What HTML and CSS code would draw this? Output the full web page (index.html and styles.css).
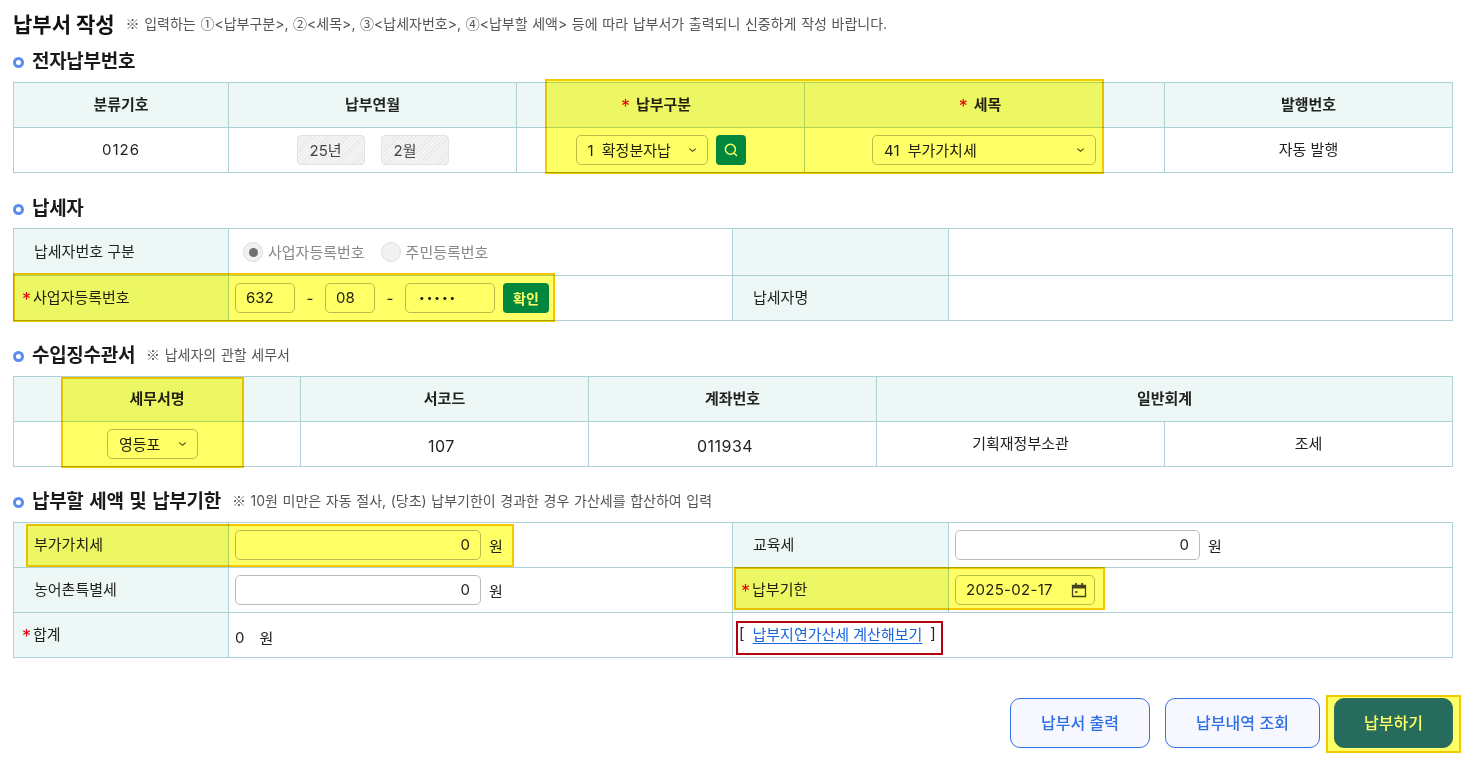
FILE: index.html
```html
<!DOCTYPE html>
<html lang="ko">
<head>
<meta charset="utf-8">
<title>납부서 작성</title>
<link rel="stylesheet" href="styles.css">
</head>
<body>
<main class="page">
  <header class="title-row">
    <h1>납부서 작성</h1>
    <p class="note"><span class="sym">※</span> 입력하는 <span class="sym">①</span>&lt;납부구분&gt;, <span class="sym">②</span>&lt;세목&gt;, <span class="sym">③</span>&lt;납세자번호&gt;, <span class="sym">④</span>&lt;납부할 세액&gt; 등에 따라 납부서가 출력되니 신중하게 작성 바랍니다.</p>
  </header>

  <section class="section s1">
    <div class="sec-head"><h2>전자납부번호</h2></div>
    <table class="grid">
      <colgroup><col class="w15a"><col class="w20"><col class="w20"><col class="w25"><col class="w20"></colgroup>
      <tr>
        <th>분류기호</th><th>납부연월</th><th class="rq"><span class="req gap">*</span>납부구분</th><th class="rq"><span class="req gap">*</span>세목</th><th>발행번호</th>
      </tr>
      <tr>
        <td class="c txt code">0126</td>
        <td class="c"><div class="ctrls center g16"><span class="ro">25년</span><span class="ro">2월</span></div></td>
        <td class="c"><div class="ctrls center g8">
          <div class="select w132"><span>1 확정분자납</span><svg class="chev" viewBox="0 0 10 6"><path d="M1.5 1.5 5 4.500l3.500-3"/></svg></div>
          <button class="square" aria-label="검색"><svg viewBox="0 0 16 16" class="mag"><circle cx="7.4" cy="7.2" r="5"/><path d="m11 11 3 3"/></svg></button>
        </div></td>
        <td><div class="ctrls end"><div class="select w224"><span>41 부가가치세</span><svg class="chev" viewBox="0 0 10 6"><path d="M1.5 1.5 5 4.500l3.500-3"/></svg></div></div></td>
        <td class="c txt">자동 발행</td>
      </tr>
    </table>
  </section>

  <section class="section s2">
    <div class="sec-head"><h2>납세자</h2></div>
    <table class="grid">
      <colgroup><col class="w15a"><col class="w35"><col class="w15"><col class="w35"></colgroup>
      <tr class="tall">
        <th class="lab">납세자번호 구분</th>
        <td class="pad"><div class="ctrls radios">
          <span class="radio on"></span><span class="rl">사업자등록번호</span>
          <span class="radio"></span><span class="rl">주민등록번호</span>
        </div></td>
        <th class="plain"></th><td></td>
      </tr>
      <tr>
        <th class="lab star"><span class="req">*</span>사업자등록번호</th>
        <td class="pad"><div class="ctrls biz">
          <input class="field w60" value="632"><span class="dash">-</span>
          <input class="field w50" value="08"><span class="dash">-</span>
          <input class="field w90 pw" type="password" value="12345">
          <button class="ok">확인</button>
        </div></td>
        <th class="lab">납세자명</th><td></td>
      </tr>
    </table>
  </section>

  <section class="section s3">
    <div class="sec-head"><h2>수입징수관서</h2><p class="note"><span class="sym">※</span> 납세자의 관할 세무서</p></div>
    <table class="grid">
      <colgroup><col class="w20a"><col class="w20"><col class="w20"><col class="w20"><col class="w20"></colgroup>
      <tr><th>세무서명</th><th>서코드</th><th>계좌번호</th><th colspan="2">일반회계</th></tr>
      <tr>
        <td><div class="ctrls sel-office"><div class="select w91"><span>영등포</span><svg class="chev" viewBox="0 0 10 6"><path d="M1.5 1.5 5 4.500l3.500-3"/></svg></div></div></td>
        <td class="c low l1">107</td><td class="c low l2">011934</td><td class="c txt">기획재정부소관</td><td class="c txt">조세</td>
      </tr>
    </table>
  </section>

  <section class="section s4">
    <div class="sec-head"><h2>납부할 세액 및 납부기한</h2><p class="note"><span class="sym">※</span> 10원 미만은 자동 절사, (당초) 납부기한이 경과한 경우 가산세를 합산하여 입력</p></div>
    <table class="grid">
      <colgroup><col class="w15a"><col class="w35"><col class="w15"><col class="w35"></colgroup>
      <tr>
        <th class="lab">부가가치세</th>
        <td class="pad"><div class="ctrls amount"><input class="field num w246" value="0"><span class="won">원</span></div></td>
        <th class="lab">교육세</th>
        <td class="pad"><div class="ctrls amount"><input class="field num w245" value="0"><span class="won">원</span></div></td>
      </tr>
      <tr>
        <th class="lab">농어촌특별세</th>
        <td class="pad"><div class="ctrls amount"><input class="field num w246" value="0"><span class="won">원</span></div></td>
        <th class="lab star"><span class="req">*</span>납부기한</th>
        <td class="pad"><div class="ctrls"><div class="field date"><span>2025-02-17</span>
          <svg class="cal" viewBox="0 0 16 16"><path class="calbody" d="M1.500 3.500h13v11h-13z"/><path class="calfill" d="M1.500 3h13v3.500h-13zM4 1h1.800v3H4zM10.200 1H12v3h-1.800z"/><rect x="4.300" y="9" width="2" height="2" class="calfill"/></svg>
        </div></div></td>
      </tr>
      <tr>
        <th class="lab star"><span class="req">*</span>합계</th>
        <td class="pad"><div class="ctrls total"><span>0</span><span>원</span></div></td>
        <td colspan="2" class="link-cell"><div class="ctrls linkrow"><span>[</span><a href="#">납부지연가산세 계산해보기</a><span>]</span></div></td>
      </tr>
    </table>
  </section>

  <footer class="actions">
    <button class="btn w140">납부서 출력</button>
    <button class="btn w155">납부내역 조회</button>
    <button class="btn primary">납부하기</button>
  </footer>

  <div class="hl a1"></div>
  <div class="hl a2"></div>
  <div class="hl a3"></div>
  <div class="hl a4"></div>
  <div class="hl a5"></div>
  <div class="hl a6"></div>
  <div class="redbox"></div>
</main>
</body>
</html>
```
FILE: styles.css
```css
* { box-sizing: border-box; }
html, body { margin: 0; padding: 0; background: #fff; }
body { font-family: Inter, "Noto Sans CJK KR", "Noto Sans", sans-serif; color: #222; font-size: 15px; overflow: hidden; }
.page { position: relative; width: 1466px; height: 761px; padding: 0 13px; }

h1, h2, p { margin: 0; }
.title-row { display: flex; align-items: center; height: 45px; padding-top: 5px; gap: 11px; }
h1 { font-size: 21px; font-weight: 700; color: #111; line-height: 28px; }
.note { font-size: 14px; color: #555; line-height: 18px; word-spacing: .7px; padding-bottom: 3px; }
.sym { font-family: "Noto Sans CJK KR", sans-serif; }

.sec-head { display: flex; align-items: center; height: 32px; padding-top: 2px; gap: 11px; margin-bottom: 5px; }
.s2 .sec-head { margin-bottom: 4px; }
h2 { font-size: 19px; letter-spacing: -0.3px; word-spacing: 1.500px; font-weight: 700; color: #1a1a1a; line-height: 24px; display: flex; align-items: center; }
h2::before { content: ""; box-sizing: border-box; width: 11px; height: 11px; border-radius: 50%; border: 3px solid #5b8def; margin-right: 8px; flex: none; }

.s2 { margin-top: 19px; }
.s3 { margin-top: 18px; }
.s4 { margin-top: 18px; }

.grid { width: 1439px; table-layout: fixed; border-collapse: collapse; }
.grid th, .grid td { border: 1px solid #aed1d6; height: 45px; padding: 0; font-size: 15px; font-weight: 400; }
.grid tr.tall th, .grid tr.tall td { height: 47px; }
.grid th { background: #edf7f6; font-weight: 700; color: #222; text-align: center; padding-bottom: 4px; }
.grid th.rq { padding-right: 9px; }
.grid th.lab { text-align: left; padding-left: 20px; font-weight: 400; }
.grid th.star { padding-left: 8px; }
.grid td.c { text-align: center; }
.grid td.txt { padding-bottom: 4px; }
.grid td.code { letter-spacing: 1px; padding-bottom: 2px; }
.grid td.low { padding-top: 4px; font-size: 16px; letter-spacing: .5px; }
.grid td.l1 { padding-right: 6px; }
.grid td.l2 { padding-right: 15px; }
.grid td.pad { padding-left: 6px; }
.grid td.link-cell { padding-bottom: 3px; }
.w15a { width: 215px; } .w15 { width: 216px; } .w20a { width: 287px; } .w20 { width: 288px; } .w25 { width: 360px; } .w35 { width: 504px; }

.req { color: #e60012; font-weight: 400; font-size: 18px; line-height: 0; margin-right: 2px; position: relative; top: 3px; }
.req.gap { margin-right: 6px; }

.ctrls { display: flex; align-items: center; }
.center { justify-content: center; }
.end { justify-content: flex-end; padding-right: 68px; }
.g8 { gap: 8px; } .g16 { gap: 16px; }

.ro { width: 68px; height: 30px; display: flex; align-items: center; padding: 0 0 2px 12px; border: 1px solid #e2e2e2; border-radius: 4px;
  background: repeating-linear-gradient(135deg, #e9e9e9 0 1px, #f4f4f4 1px 3px); color: #444; }

.select { height: 30px; border: 1px solid #bbb; border-radius: 5px; background: #fff; display: flex; align-items: center; justify-content: space-between; padding: 0 10px 2px 11px; font-size: 15px; word-spacing: 4px; color: #222; }
.w132 { width: 132px; } .w224 { width: 224px; } .w91 { width: 91px; }
.chev { width: 9px; height: 6px; fill: none; stroke: #444; stroke-width: 1.3; margin-top: 2px; }
.square { width: 30px; height: 30px; border: 0; padding: 0; border-radius: 4px; background: #008799; display: flex; align-items: center; justify-content: center; }
.mag { width: 16px; height: 16px; fill: none; stroke: #fff; stroke-width: 1.5; }

.radios { gap: 5px; }
.radio { width: 20px; height: 20px; border-radius: 50%; border: 1px solid #ddd; background: #f1f1f1; position: relative; margin-left: 8px; }
.radio.on::after { content: ""; position: absolute; left: 4.500px; top: 4.500px; width: 9px; height: 9px; border-radius: 50%; background: #707070; }
.rl { color: #888; font-size: 15px; padding-bottom: 2px; }
.rl + .radio { margin-left: 11px; }

.field { height: 30px; border: 1px solid #bbb; border-radius: 5px; background: #fff; font: 15px Inter, "Noto Sans CJK KR", sans-serif; color: #222; padding: 0 10px 2px; outline: none; }
.w60 { width: 60px; } .w50 { width: 50px; } .w90 { width: 90px; } .w246 { width: 246px; } .w245 { width: 245px; } .w140 { width: 140px; }
.biz .dash { width: 30px; text-align: center; }
.pw { font-size: 10px; letter-spacing: 2px; padding-left: 13px; }
.ok { width: 46px; height: 30px; margin-left: 8px; border: 0; border-radius: 4px; background: #008799; color: #fff; font: 700 14px "Noto Sans CJK KR", sans-serif; padding: 0; }

.num { text-align: right; padding-right: 10px; }
.amount .won { margin-left: 8px; }
.date { display: flex; align-items: center; justify-content: space-between; width: 140px; padding-right: 7px; letter-spacing: .3px; }
.cal { width: 16px; height: 16px; margin-top: 2px; }
.calbody { fill: none; stroke: #444; stroke-width: 1.3; }
.calfill { fill: #444; }
.total { gap: 15px; padding-top: 5px; }
.sel-office { padding-left: 93px; }
.linkrow { padding-left: 6px; gap: 8px; }
.linkrow a { color: #1a66e0; text-underline-offset: 3px; }

.actions { display: flex; justify-content: flex-end; gap: 15px; margin-top: 40px; }
.btn { height: 50px; border: 1px solid #2f72e4; border-radius: 10px; background: #f7f8ff; color: #2f6fe4; font: 500 16px "Noto Sans CJK KR", sans-serif; padding: 0 0 2px; }
.w155 { width: 155px; }
.btn.primary { width: 119px; background: #266be4; color: #fff; margin-left: -1px; }

.hl { position: absolute; background: #ffff66; border: 2px solid #f7c800; mix-blend-mode: multiply; }
.a1 { left: 545px; top: 79px; width: 559px; height: 95px; }
.a2 { left: 13px; top: 273px; width: 542px; height: 49px; }
.a3 { left: 61px; top: 377px; width: 183px; height: 91px; }
.a4 { left: 26px; top: 524px; width: 488px; height: 43px; }
.a5 { left: 734px; top: 567px; width: 371px; height: 43px; }
.a6 { left: 1326px; top: 695px; width: 135px; height: 58px; }
.redbox { position: absolute; left: 736px; top: 621px; width: 207px; height: 34px; border: 2px solid #b5000f; }
```
